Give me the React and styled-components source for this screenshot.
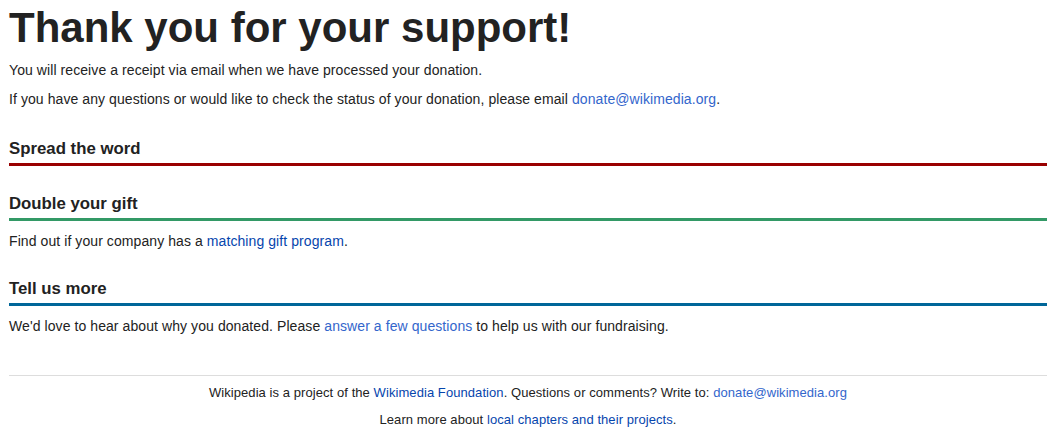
import React from 'react';
import styled, { createGlobalStyle } from 'styled-components';

const GlobalStyle = createGlobalStyle`
  body {
    margin: 0;
    background: #fff;
    color: #222;
    font-family: "Liberation Sans", Arial, sans-serif;
  }
`;

const Page = styled.div`
  width: 1038px;
  margin: 0 0 0 9px;
`;

const Title = styled.h1`
  margin: 4px 0 8px 0;
  font-size: 42px;
  line-height: 48px;
  font-weight: bold;
  color: #222;
`;

const Intro = styled.div`
  margin-bottom: 30px;
`;

const Text = styled.p`
  margin: 0 0 9px 0;
  font-size: 14px;
  line-height: 20px;
  letter-spacing: 0.08px;
`;

const Link = styled.a`
  color: ${({ tone }) => (tone === 'light' ? '#3366cc' : '#0645ad')};
  text-decoration: none;
`;

const SectionTitle = styled.h2`
  margin: 28.5px 0 10px 0;
  padding-bottom: 3.5px;
  font-size: 16.8px;
  line-height: 20px;
  font-weight: bold;
  color: #222;
  border-bottom: 3px solid ${({ accent }) => accent};
`;

const Footer = styled.footer`
  margin-top: 39px;
  padding-top: 7px;
  border-top: 1px solid #ddd;
  text-align: center;
`;

const FooterText = styled.p`
  margin: 0 0 7px 0;
  font-size: 13px;
  line-height: 20px;
  letter-spacing: 0.07px;
`;

const App = () => {
  return (
    <>
      <GlobalStyle />
      <Page>
        <Title>Thank you for your support!</Title>
        <Intro>
          <Text>You will receive a receipt via email when we have processed your donation.</Text>
          <Text>
            If you have any questions or would like to check the status of your donation, please email{' '}
            <Link tone="light" href="#">donate@wikimedia.org</Link>.
          </Text>
        </Intro>

        <SectionTitle accent="#990000">Spread the word</SectionTitle>

        <SectionTitle accent="#339966">Double your gift</SectionTitle>
        <Text>
          Find out if your company has a <Link href="#">matching gift program</Link>.
        </Text>

        <SectionTitle accent="#006699">Tell us more</SectionTitle>
        <Text>
          We'd love to hear about why you donated. Please{' '}
          <Link tone="light" href="#">answer a few questions</Link> to help us with our fundraising.
        </Text>

        <Footer>
          <FooterText>
            Wikipedia is a project of the <Link href="#">Wikimedia Foundation</Link>. Questions or comments? Write to:{' '}
            <Link tone="light" href="#">donate@wikimedia.org</Link>
          </FooterText>
          <FooterText>
            Learn more about <Link href="#">local chapters and their projects</Link>.
          </FooterText>
        </Footer>
      </Page>
    </>
  );
};

export default App;
